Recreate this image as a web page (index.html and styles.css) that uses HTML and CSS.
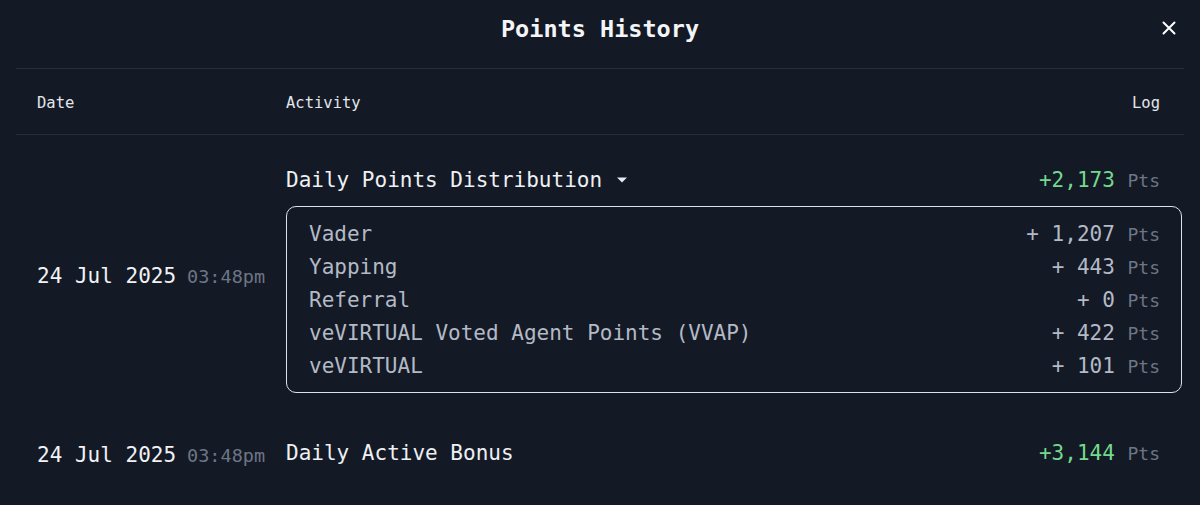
FILE: index.html
```html
<!DOCTYPE html>
<html lang="en">
<head>
    <meta charset="UTF-8">
    <meta name="viewport" content="width=device-width, initial-scale=1.0">
    <title>Points History</title>
    <link rel="stylesheet" href="styles.css">
</head>
<body>
    <div class="modal">
        <!-- Title -->
        <div class="modal-header">
            <h1>Points History</h1>
            <button class="close-button" aria-label="Close">
                <svg width="14" height="14" viewBox="0 0 14 14">
                    <path d="M1.5 1.5 L12.5 12.5 M12.5 1.5 L1.5 12.5" stroke="#ffffff" stroke-width="2" stroke-linecap="round"/>
                </svg>
            </button>
        </div>

        <!-- Column headings -->
        <div class="table-head">
            <div class="col-date">Date</div>
            <div class="col-activity">Activity</div>
            <div class="col-log">Log</div>
        </div>

        <!-- Rows -->
        <div class="history-row">
            <div class="col-date date-cell">
                <span class="date">24 Jul 2025</span>
                <span class="time">03:48pm</span>
            </div>
            <div class="activity-cell">
                <div class="activity-line">
                    <span class="activity-name">Daily Points Distribution
                        <svg class="caret" width="12" height="8" viewBox="0 0 12 8">
                            <path d="M1 1.5 H11 L6 6.5 Z" fill="#e8eaef"/>
                        </svg>
                    </span>
                    <span class="amount"><span class="gain">+2,173</span> <span class="unit">Pts</span></span>
                </div>
                <div class="breakdown">
                    <div class="breakdown-item"><span>Vader</span><span>+ 1,207 <span class="unit">Pts</span></span></div>
                    <div class="breakdown-item"><span>Yapping</span><span>+ 443 <span class="unit">Pts</span></span></div>
                    <div class="breakdown-item"><span>Referral</span><span>+ 0 <span class="unit">Pts</span></span></div>
                    <div class="breakdown-item"><span>veVIRTUAL Voted Agent Points (VVAP)</span><span>+ 422 <span class="unit">Pts</span></span></div>
                    <div class="breakdown-item"><span>veVIRTUAL</span><span>+ 101 <span class="unit">Pts</span></span></div>
                </div>
            </div>
        </div>

        <div class="history-row">
            <div class="col-date date-cell">
                <span class="date">24 Jul 2025</span>
                <span class="time">03:48pm</span>
            </div>
            <div class="activity-cell">
                <div class="activity-line">
                    <span class="activity-name">Daily Active Bonus</span>
                    <span class="amount"><span class="gain">+3,144</span> <span class="unit">Pts</span></span>
                </div>
            </div>
        </div>
    </div>
</body>
</html>
```

FILE: styles.css
```css
/* General Styles */
body {
    margin: 0;
    padding: 0;
    background-color: #131a26;
    color: #eceef2;
    font-family: "DejaVu Sans Mono", "Liberation Mono", monospace;
}

.modal {
    padding: 0 16px;
}

/* Header */
.modal-header {
    height: 68px;
    display: flex;
    align-items: center;
    justify-content: center;
    position: relative;
    border-bottom: 1px solid #272e3b;
}

.modal-header h1 {
    margin: 0 0 10px 0;
    font-size: 23.5px;
    font-weight: bold;
    color: #f4f5f7;
}

.close-button {
    position: absolute;
    right: 1px;
    top: 14px;
    width: 28px;
    height: 28px;
    background: none;
    border: none;
    padding: 0;
    display: flex;
    align-items: center;
    justify-content: center;
    cursor: pointer;
}

/* Table head */
.table-head {
    height: 65px;
    display: flex;
    align-items: center;
    font-size: 15.5px;
    color: #e3e6eb;
    border-bottom: 1px solid #272e3b;
}

.table-head div {
    padding-top: 2px;
}

.col-date {
    width: 249px;
    padding-left: 21px;
    flex-shrink: 0;
}

.col-activity {
    flex-grow: 1;
}

.col-log {
    padding-right: 24px;
}

/* Rows */
.history-row {
    display: flex;
    align-items: center;
    padding: 19px 0 15px 0;
}

.date-cell {
    display: flex;
    align-items: baseline;
    gap: 11px;
    padding-top: 4px;
}

.date {
    font-size: 21px;
    color: #f1f2f5;
}

.time {
    font-size: 18.5px;
    color: #6e7584;
}

.activity-cell {
    flex-grow: 1;
    padding-right: 2px;
}

.activity-line {
    height: 52px;
    display: flex;
    align-items: center;
    justify-content: space-between;
    padding-right: 22px;
}

.activity-name {
    font-size: 21px;
    color: #eef0f3;
    display: flex;
    align-items: center;
    gap: 14px;
}

.amount {
    font-size: 21px;
}

.gain {
    color: #74d98c;
}

.unit {
    font-size: 18px;
    color: #6e7584;
}

/* Breakdown box */
.breakdown {
    border: 1.5px solid #dde1e8;
    border-radius: 10px;
    padding: 11px 21px 9px 22px;
}

.breakdown-item {
    display: flex;
    justify-content: space-between;
    line-height: 32px;
    font-size: 21px;
    color: #b3b9c5;
}
```
